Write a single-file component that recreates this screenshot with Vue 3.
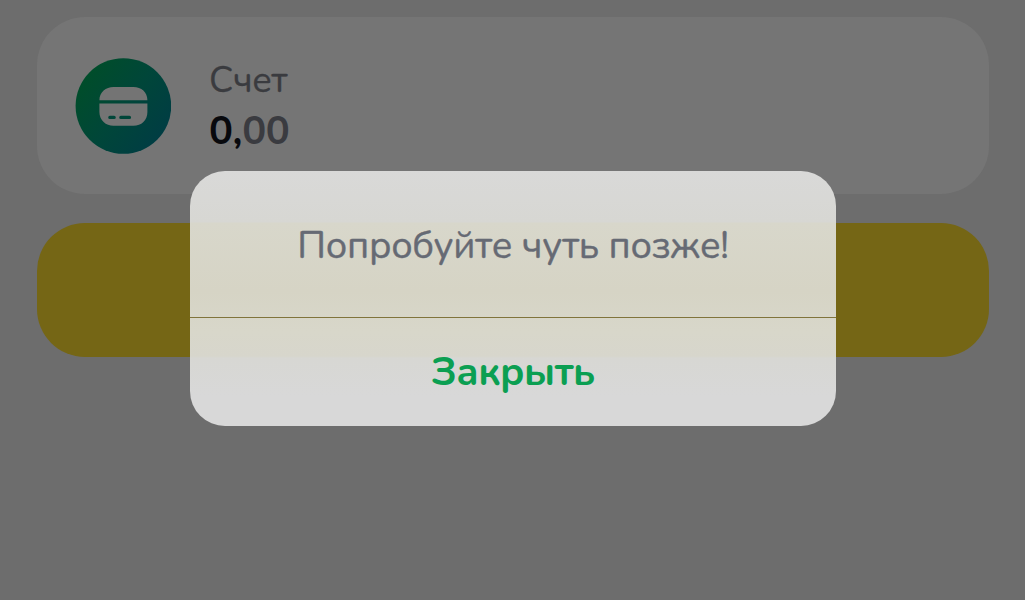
<template>
  <div class="screen">
    <div class="account-card">
      <svg class="account-icon" viewBox="0 0 96 96">
        <defs>
          <linearGradient id="iconFill" x1="0.1" y1="0.2" x2="0.9" y2="0.8">
            <stop offset="0" stop-color="#004d2a" />
            <stop offset="0.5" stop-color="#004639" />
            <stop offset="1" stop-color="#003d43" />
          </linearGradient>
        </defs>
        <circle cx="48.4" cy="48" r="47.8" fill="url(#iconFill)" />
        <path
          d="M24.4 42.3C24.4 34 31 29 38.4 29H58.4C66.4 29 72.4 34 72.4 42.3Z
             M24.4 45.4H72.4V54C72.4 62.5 66.4 67.8 58.4 67.8H38.4C31 67.8 24.4 62.5 24.4 54Z"
          fill="#747474"
        />
        <path d="M34.9 59.4H39.1M45.9 59.4H54.4" stroke="#004639" stroke-width="3.4" stroke-linecap="round" />
      </svg>
      <div class="account-info">
        <span class="account-label">{{ account.label }}</span>
        <span class="account-sum">{{ account.whole }}<span class="cents">{{ account.cents }}</span></span>
      </div>
    </div>

    <div class="action-btn"></div>

    <!-- Диалог поверх страницы -->
    <div class="dialog">
      <div class="dialog-body">
        <span class="dialog-text">Попробуйте чуть позже!</span>
      </div>
      <button class="dialog-close">
        <span class="close-text">Закрыть</span>
      </button>
    </div>
  </div>
</template>

<script setup>
const account = {
  label: 'Счет',
  whole: '0,',
  cents: '00'
};
</script>

<style>
body {
  background: #6d6d6d;
}
</style>

<style scoped>
.screen {
  position: relative;
  box-sizing: border-box;
  width: 1025px;
  height: 600px;
  padding: 17px 36px 0 37px;
  display: flex;
  flex-direction: column;
  gap: 29px;
  overflow: hidden;
  background: #6d6d6d;
  font-family: Nunito, "Noto Sans", "Open Sans", sans-serif;
}

.account-card {
  box-sizing: border-box;
  height: 177px;
  padding: 41px 38px 0;
  display: flex;
  align-items: flex-start;
  gap: 38px;
  border-radius: 48px;
  background: #757575;
}

.account-icon {
  width: 96px;
  height: 96px;
  flex-shrink: 0;
}

.account-info {
  display: flex;
  flex-direction: column;
  white-space: nowrap;
}

.account-label {
  height: 50px;
  line-height: 46px;
  font-size: 36px;
  letter-spacing: -0.4px;
  color: #3a3b3f;
  -webkit-text-stroke: 0.3px #3a3b3f;
}

.account-sum {
  line-height: 46px;
  font-size: 40px;
  font-weight: 700;
  letter-spacing: -0.4px;
  color: #08090d;
}

.cents {
  color: #3a3b40;
}

.action-btn {
  height: 134px;
  border-radius: 48px;
  background: #756615;
}

.dialog {
  position: absolute;
  left: 190px;
  top: 171px;
  width: 646px;
  height: 254.5px;
  display: flex;
  flex-direction: column;
  overflow: hidden;
  border-radius: 35px;
  background: linear-gradient(
    #d9d9d8 0,
    #d7d7d3 51px,
    #d8d7cb 52px,
    #d6d4c5 120px,
    #d8d7ca 160px,
    #d7d6cc 185px,
    #d7d7d3 187px,
    #d8d8d8 225px
  );
}

.dialog-body {
  height: 146px;
  display: flex;
  justify-content: center;
  border-bottom: 1px solid #80743c;
}

.dialog-text {
  line-height: 149px;
  font-size: 38px;
  letter-spacing: -0.24px;
  white-space: nowrap;
  color: #666a74;
  -webkit-text-stroke: 0.4px #666a74;
}

.dialog-close {
  flex: 1;
  padding: 0;
  border: none;
  background: none;
  font-family: inherit;
  cursor: pointer;
}

.close-text {
  font-size: 40px;
  font-weight: 700;
  letter-spacing: -0.5px;
  color: #0b9f52;
}
</style>
